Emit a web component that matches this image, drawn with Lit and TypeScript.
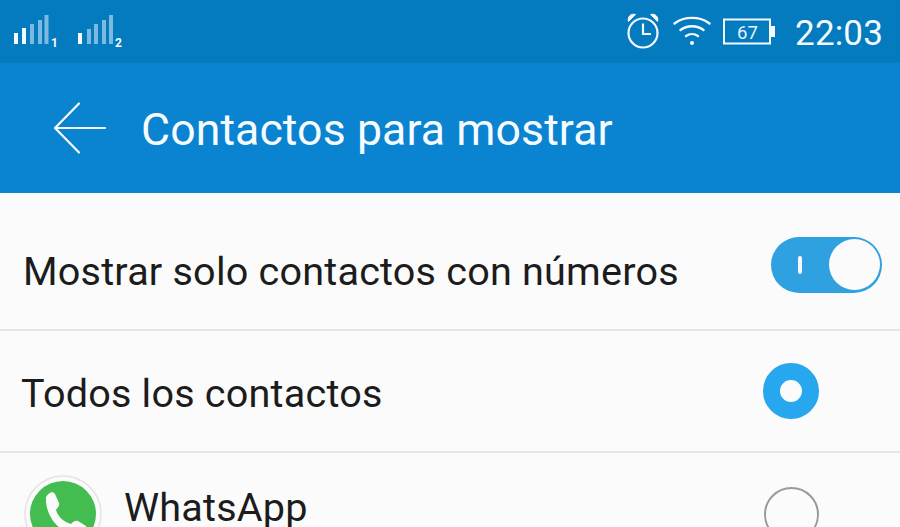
import { LitElement, html, css } from "lit";
import { customElement } from "lit/decorators.js";

@customElement("app-root")
export class AppRoot extends LitElement {
  static styles = css`
    :host { display: block; width: 900px; height: 527px; overflow: hidden; background: #fbfbfb; font-family: Roboto, "Liberation Sans", sans-serif; color: #1c1c1c; }
    .status { height: 63px; background: #047abf; display: flex; align-items: flex-start; justify-content: space-between; color: #f4fbff; }
    .signals { display: block; margin: 13px 0 0 12px; }
    .status-right { display: flex; align-items: flex-start; padding-right: 17px; }
    .alarm { display: block; margin: 12px 0 0 0; }
    .wifi { display: block; margin: 15px 0 0 11px; }
    .battery { display: block; margin: 18px 0 0 12px; }
    .time { font-size: 35px; line-height: 40px; margin: 14px 0 0 19px; letter-spacing: 0.15px; }
    .bar { height: 130px; background: #0a84d0; display: flex; align-items: center; color: #f6fbff; padding-left: 53px; box-sizing: border-box; }
    .bar svg { display: block; margin: 0 34px 0 0; }
    .bar h1 { font-size: 44.6px; line-height: 52px; font-weight: 400; margin: 3px 0 0; letter-spacing: 0.1px; }
    .row { display: flex; align-items: center; justify-content: space-between; border-bottom: 2px solid #e6e6e6; box-sizing: border-box; font-size: 39.6px; letter-spacing: 0.2px; }
    .r1 { height: 138px; padding: 20px 18px 0 23px; }
    .r2 { height: 122px; padding: 5px 81px 0 21px; }
    .r3 { height: 122px; border: 0; padding: 0 81px 0 24px; align-items: flex-start; }
    .toggle { width: 111px; height: 56px; border-radius: 28px; background: #2fa1e0; display: flex; align-items: center; justify-content: space-between; box-sizing: border-box; padding: 0 2px 0 27px; margin-top: -13px; }
    .tick { width: 4px; height: 18px; border-radius: 2px; background: #f4fafd; }
    .knob { width: 51px; height: 51px; border-radius: 50%; background: #fbfbfb; }
    .on { width: 56px; height: 56px; border-radius: 50%; box-sizing: border-box; border: 17px solid #27a7ee; background: #fbfbfb; margin: -5px 0 0; }
    .off { width: 55px; height: 55px; border-radius: 50%; box-sizing: border-box; border: 2px solid #9a9a9a; margin-top: 34px; }
    .app { display: flex; align-items: flex-start; gap: 22px; }
    .app svg { display: block; margin-top: 22px; }
    .app span { line-height: 46px; margin-top: 32px; }
  `;

  render() {
    return html`
      <div class="status">
        <svg class="signals" width="115" height="36" viewBox="0 0 115 36" fill="#f4fbff">
          <rect x="2" y="20" width="4" height="11"/><rect x="10" y="15" width="4" height="16"/>
          <g opacity=".5"><rect x="18" y="11" width="4" height="20"/><rect x="26" y="7" width="4" height="24"/><rect x="32.500" y="2" width="4" height="29"/></g>
          <text x="39" y="33.500" font-size="12" font-weight="700" font-family="Roboto">1</text>
          <rect x="66" y="20" width="4" height="11"/>
          <g opacity=".5"><rect x="75" y="16" width="4" height="15"/><rect x="82" y="11" width="4" height="20"/><rect x="90" y="7" width="4" height="24"/><rect x="97" y="2" width="4" height="29"/></g>
          <text x="103" y="33.500" font-size="12" font-weight="700" font-family="Roboto">2</text>
        </svg>
        <div class="status-right">
          <svg class="alarm" width="34" height="38" viewBox="0 0 34 38" fill="none" stroke="#f4fbff" stroke-width="2.200" transform="translate(-2 0)">
            <circle cx="17" cy="21" r="14.500"/><path d="M17 11.500V22H25"/>
            <path d="M2.500 9.500C1 5 5 1 9.500 2.500Z" fill="#f4fbff" stroke-width="1"/><path d="M31.500 9.500C33 5 29 1 24.500 2.500Z" fill="#f4fbff" stroke-width="1"/>
          </svg>
          <svg class="wifi" width="38" height="32" viewBox="0 0 38 32" fill="none" stroke="#f4fbff" stroke-width="2.400" stroke-linecap="round">
            <path d="M1.500 8.500C11 1 27 1 36.500 8.500"/><path d="M7.500 15C14 10 24 10 30.500 15"/><path d="M13 21C16.500 18.500 21.500 18.500 25 21"/>
            <circle cx="19" cy="28" r="2" fill="#f4fbff" stroke="none"/>
          </svg>
          <svg class="battery" width="53" height="28" viewBox="0 0 53 28">
            <rect x="1" y="1.500" width="46" height="24" fill="none" stroke="#f4fbff" stroke-width="2"/>
            <rect x="48" y="8" width="4" height="11" fill="#f4fbff"/>
            <text x="14" y="21" font-size="18.500" font-family="Roboto" fill="#e4f3fc">67</text>
          </svg>
          <div class="time">22:03</div>
        </div>
      </div>
      <div class="bar">
        <svg width="54" height="52" viewBox="0 0 54 52" fill="none" stroke="#f6fbff" stroke-width="2.200" stroke-linecap="round" stroke-linejoin="round">
          <path d="M26 1.500L2 26L26 50.500"/><path d="M2 26H52"/>
        </svg>
        <h1>Contactos para mostrar</h1>
      </div>
      <div class="row r1">
        <span>Mostrar solo contactos con números</span>
        <div class="toggle"><div class="tick"></div><div class="knob"></div></div>
      </div>
      <div class="row r2">
        <span>Todos los contactos</span>
        <div class="on"></div>
      </div>
      <div class="row r3">
        <div class="app">
          <svg width="78" height="78" viewBox="0 0 78 78">
            <circle cx="39" cy="39" r="38" fill="#fbfbfb" stroke="#e4e4e4" stroke-width="1.500"/>
            <circle cx="39" cy="39" r="33" fill="#43bd4f"/>
            <path d="M22 22C25 17 29 16 31 19L35 28C36 31 33 33 32 35C34 42 40 47 47 49C49 47 51 45 54 46L62 51C64 55 58 61 52 60C36 58 21 42 22 22Z" fill="#fbfbfb"/>
          </svg>
          <span>WhatsApp</span>
        </div>
        <div class="off"></div>
      </div>
    `;
  }
}
